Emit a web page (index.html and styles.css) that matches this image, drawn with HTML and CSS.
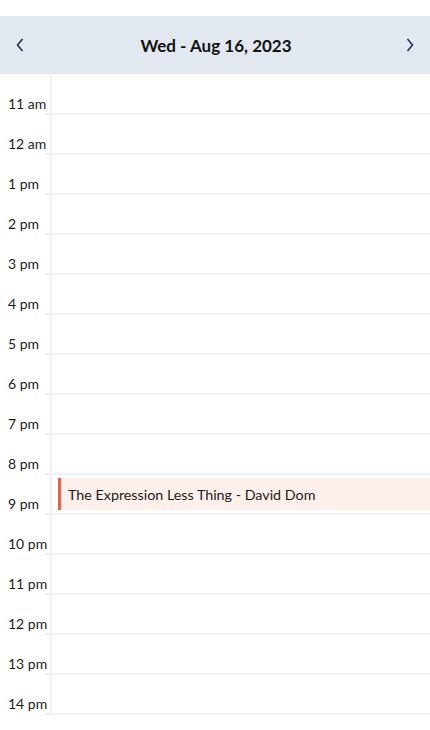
FILE: index.html
```html
<!DOCTYPE html>
<html>
<head>
<meta charset="utf-8">
<link rel="stylesheet" href="styles.css">
</head>
<body>
<div class="header">
  <button class="nav"><svg width="10" height="16" viewBox="0 0 10 16"><path d="M7.5 2 L2.5 8 L7.5 14" fill="none" stroke="#1f2a4b" stroke-width="1.5"/></svg></button>
  <div class="title">Wed - Aug 16, 2023</div>
  <button class="nav"><svg width="10" height="16" viewBox="0 0 10 16"><path d="M2.5 2 L7.5 8 L2.5 14" fill="none" stroke="#1f2a4b" stroke-width="1.5"/></svg></button>
</div>
<div class="day">
  <div class="row"><div class="label">11 am</div><div class="tick"></div><div class="cell"></div></div>
  <div class="row"><div class="label">12 am</div><div class="tick"></div><div class="cell"></div></div>
  <div class="row"><div class="label">1 pm</div><div class="tick"></div><div class="cell"></div></div>
  <div class="row"><div class="label">2 pm</div><div class="tick"></div><div class="cell"></div></div>
  <div class="row"><div class="label">3 pm</div><div class="tick"></div><div class="cell"></div></div>
  <div class="row"><div class="label">4 pm</div><div class="tick"></div><div class="cell"></div></div>
  <div class="row"><div class="label">5 pm</div><div class="tick"></div><div class="cell"></div></div>
  <div class="row"><div class="label">6 pm</div><div class="tick"></div><div class="cell"></div></div>
  <div class="row"><div class="label">7 pm</div><div class="tick"></div><div class="cell"></div></div>
  <div class="row"><div class="label">8 pm</div><div class="tick"></div><div class="cell"></div></div>
  <div class="row"><div class="label">9 pm</div><div class="tick"></div><div class="cell"><div class="event">The Expression Less Thing - David Dom</div></div></div>
  <div class="row"><div class="label">10 pm</div><div class="tick"></div><div class="cell"></div></div>
  <div class="row"><div class="label">11 pm</div><div class="tick"></div><div class="cell"></div></div>
  <div class="row"><div class="label">12 pm</div><div class="tick"></div><div class="cell"></div></div>
  <div class="row"><div class="label">13 pm</div><div class="tick"></div><div class="cell"></div></div>
  <div class="row"><div class="label">14 pm</div><div class="tick"></div><div class="cell"></div></div>
</div>
</body>
</html>
```
FILE: styles.css
```css
* { box-sizing: border-box; }
html, body { margin: 0; padding: 0; background: #fff; }
body {
  font-family: Lato, "Open Sans", sans-serif;
  color: #1c1c1c;
}
.header {
  margin-top: 16px;
  height: 58px;
  background: #e2e8f0;
  display: flex;
  align-items: center;
  justify-content: space-between;
  padding: 0 14px;
}
.nav {
  background: none;
  border: 0;
  padding: 0;
  width: 12px;
  height: 16px;
  display: flex;
  align-items: center;
  justify-content: center;
}
.title {
  font-size: 17px;
  font-weight: 700;
  color: #111;
  padding-left: 2px;
}
.day {
  padding-top: 1px;
}
.row {
  display: grid;
  grid-template-columns: 45px 5px 1fr;
  height: 40px;
}
.label {
  font-size: 14px;
  color: #1c1c1c;
  padding-left: 8px;
  align-self: end;
  padding-bottom: 3px;
  white-space: nowrap;
}
.tick {
  border-bottom: 2px solid #eef2f6;
}
.cell {
  border-left: 2px solid #eef2f6;
  border-bottom: 2px solid #eef2f6;
  padding: 3px 0 3px 6px;
}
.event {
  height: 32px;
  background: #fdefea;
  border-left: 3px solid #e9604c;
  display: flex;
  align-items: center;
  padding-left: 7px;
  font-size: 14.3px;
  color: #1c1c1c;
}
```
